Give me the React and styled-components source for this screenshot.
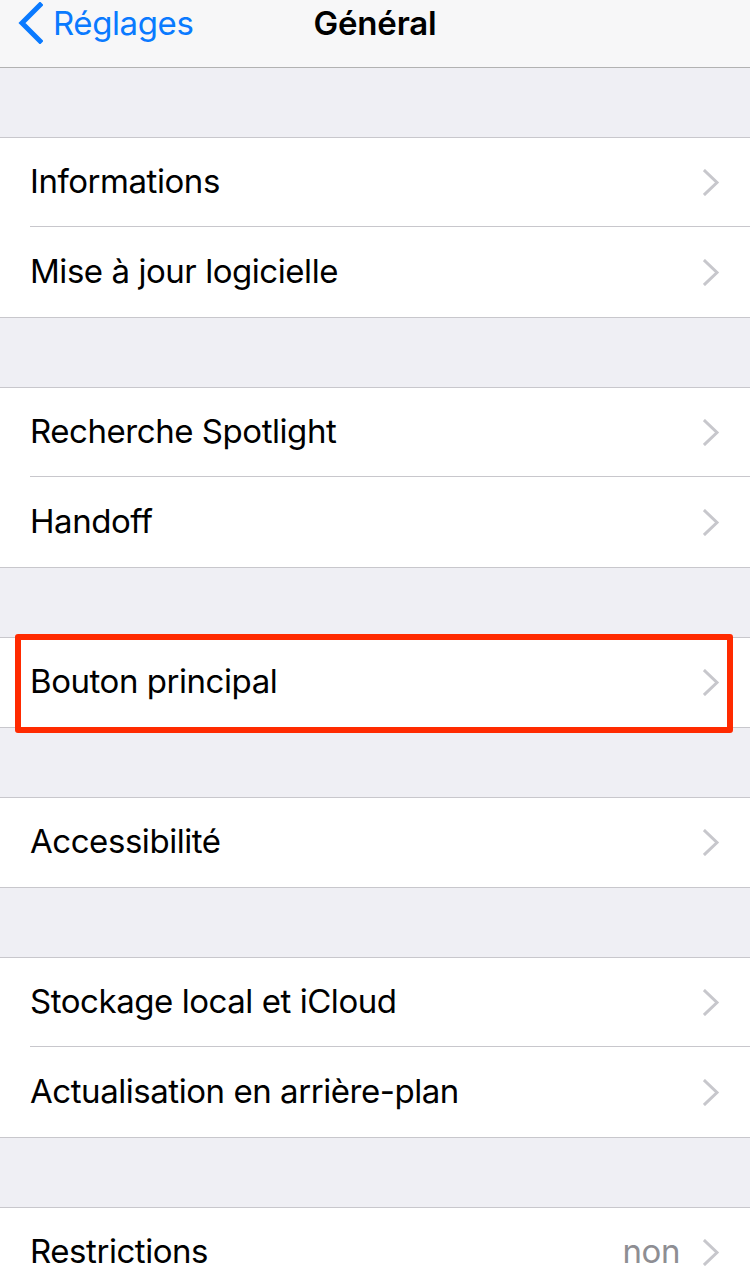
import styled, { createGlobalStyle } from "styled-components";

const GlobalStyle = createGlobalStyle`
  html, body {
    margin: 0;
    padding: 0;
    background: #efeff4;
  }
  body {
    font-family: Inter, "Noto Sans", "Liberation Sans", sans-serif;
    -webkit-font-smoothing: antialiased;
  }
`;

const Screen = styled.div`
  width: 750px;
  min-height: 1273px;
  background: #efeff4;
  overflow: hidden;
`;

const NavBar = styled.header`
  position: relative;
  height: 67px;
  background: #f7f7f8;
  border-bottom: 1px solid #b2b2b2;
  display: flex;
  align-items: center;
  justify-content: center;
`;

const BackButton = styled.a`
  position: absolute;
  left: 17px;
  top: 0;
  height: 46px;
  display: flex;
  align-items: center;
  gap: 10px;
  color: #0a7aff;
  font-size: 33px;
  letter-spacing: -0.4px;
  text-decoration: none;
`;

const Title = styled.h1`
  margin: 0 0 21px;
  font-size: 33px;
  font-weight: 600;
  color: #000;
  letter-spacing: -0.2px;
`;

const Section = styled.section`
  margin-top: 69px;
  background: #fff;
  border-top: 1px solid #c8c7cc;
  border-bottom: 1px solid #c8c7cc;
`;

const Row = styled.div`
  position: relative;
  height: 89px;
  display: flex;
  align-items: center;
  padding: 0 30px 0 30px;
  & + & {
    border-top: 1px solid transparent;
  }
  & + &::before {
    content: "";
    position: absolute;
    left: 30px;
    right: 0;
    top: -2px;
    height: 1px;
    background: #c8c7cc;
  }
`;

const Label = styled.span`
  flex: 1;
  margin-bottom: 3px;
  font-size: 33px;
  color: #000;
  letter-spacing: -0.45px;
`;

const Value = styled.span`
  margin: 0 23px 3px 0;
  font-size: 33px;
  color: #8e8e93;
  letter-spacing: -0.45px;
`;

// red annotation frame drawn over a row
const Highlight = styled.div`
  position: absolute;
  left: 15px;
  right: 17px;
  top: -4px;
  bottom: -6px;
  border: 6px solid #ff2a00;
  border-radius: 3px;
  pointer-events: none;
`;

const BackChevron = () => (
  <svg width="26" height="42" viewBox="0 0 26 42">
    <path
      d="M23 3 L5 21 L23 39"
      fill="none"
      stroke="currentColor"
      strokeWidth="5"
      strokeLinecap="square"
    />
  </svg>
);

const Disclosure = () => (
  <svg width="17" height="27" viewBox="0 0 17 27">
    <path
      d="M2 2 L14 13.5 L2 25"
      fill="none"
      stroke="#c7c7cc"
      strokeWidth="3"
      strokeLinecap="square"
    />
  </svg>
);

const sections = [
  [{ label: "Informations" }, { label: "Mise à jour logicielle" }],
  [{ label: "Recherche Spotlight" }, { label: "Handoff" }],
  [{ label: "Bouton principal", marked: true }],
  [{ label: "Accessibilité" }],
  [{ label: "Stockage local et iCloud" }, { label: "Actualisation en arrière-plan" }],
  [{ label: "Restrictions", value: "non" }],
];

export default function App() {
  return (
    <Screen>
      <GlobalStyle />
      <NavBar>
        <BackButton href="#">
          <BackChevron />
          Réglages
        </BackButton>
        <Title>Général</Title>
      </NavBar>
      {sections.map((rows, i) => (
        <Section key={i}>
          {rows.map((row) => (
            <Row key={row.label}>
              <Label>{row.label}</Label>
              {row.value && <Value>{row.value}</Value>}
              <Disclosure />
              {row.marked && <Highlight />}
            </Row>
          ))}
        </Section>
      ))}
    </Screen>
  );
}
